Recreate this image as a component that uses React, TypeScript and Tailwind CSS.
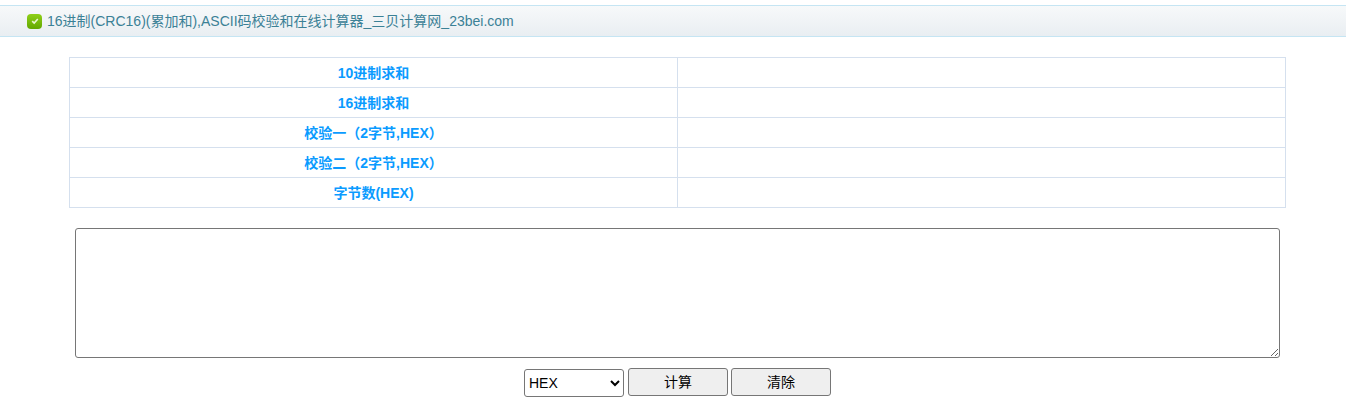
import React from 'react';

const rows = ['10进制求和', '16进制求和', '校验一（2字节,HEX）', '校验二（2字节,HEX）', '字节数(HEX)'];

const font = "font-['Liberation_Sans','Noto_Sans_CJK_SC',sans-serif]";

const App: React.FC = () => {
  return (
    <div className={`w-full h-[406px] overflow-hidden bg-white pt-[5px] ${font}`}>
      {/* Title bar */}
      <div className="h-[32px] border-y border-[#c5e5f3] bg-gradient-to-b from-[#f7f9fa] to-[#e9eef2] flex items-center pl-[27px] gap-[5px]">
        <span className="w-[15px] h-[15px] rounded-[4px] bg-gradient-to-b from-[#8fd018] to-[#62a800] flex items-center justify-center">
          <svg viewBox="0 0 10 10" className="w-[8px] h-[8px]" fill="none" stroke="#e9f7d0" strokeWidth="2">
            <path d="M1.5 5.2 L4 7.5 L8.5 2.5" />
          </svg>
        </span>
        <span className="text-[14px] text-[#3b8196] leading-none">16进制(CRC16)(累加和),ASCII码校验和在线计算器_三贝计算网_23bei.com</span>
      </div>

      {/* Results table */}
      <div className="mt-[20px] mx-[69px] w-[1217px] border-t border-l border-[#d5e0ee]">
        {rows.map((label) => (
          <div key={label} className="grid grid-cols-2 h-[30px] border-b border-[#d5e0ee]">
            <div className="border-r border-[#d5e0ee] flex items-center justify-center pt-[1px] text-[14px] font-bold text-[#0a9bff]">
              {label}
            </div>
            <div className="border-r border-[#d5e0ee]" />
          </div>
        ))}
      </div>

      {/* Input */}
      <div className="mt-[20px] pl-[75px]">
        <textarea className="w-[1205px] h-[130px] bg-white border border-[#767676] rounded-[3px] block outline-none" />
      </div>

      {/* Controls */}
      <div className="mt-[10px] pl-[524px] flex items-start gap-[3px]">
        <select
          defaultValue="HEX"
          className="mt-[1px] mr-[1px] w-[100px] h-[28px] bg-white border border-[#767676] rounded-[3px] text-[14px] text-black"
        >
          <option>HEX</option>
          <option>ASCII</option>
        </select>
        <button className="w-[100px] h-[28px] bg-[#efefef] border border-[#767676] rounded-[3px] text-[14px] text-black">
          计算
        </button>
        <button className="w-[100px] h-[28px] bg-[#efefef] border border-[#767676] rounded-[3px] text-[14px] text-black">
          清除
        </button>
      </div>
    </div>
  );
};

export default App;
